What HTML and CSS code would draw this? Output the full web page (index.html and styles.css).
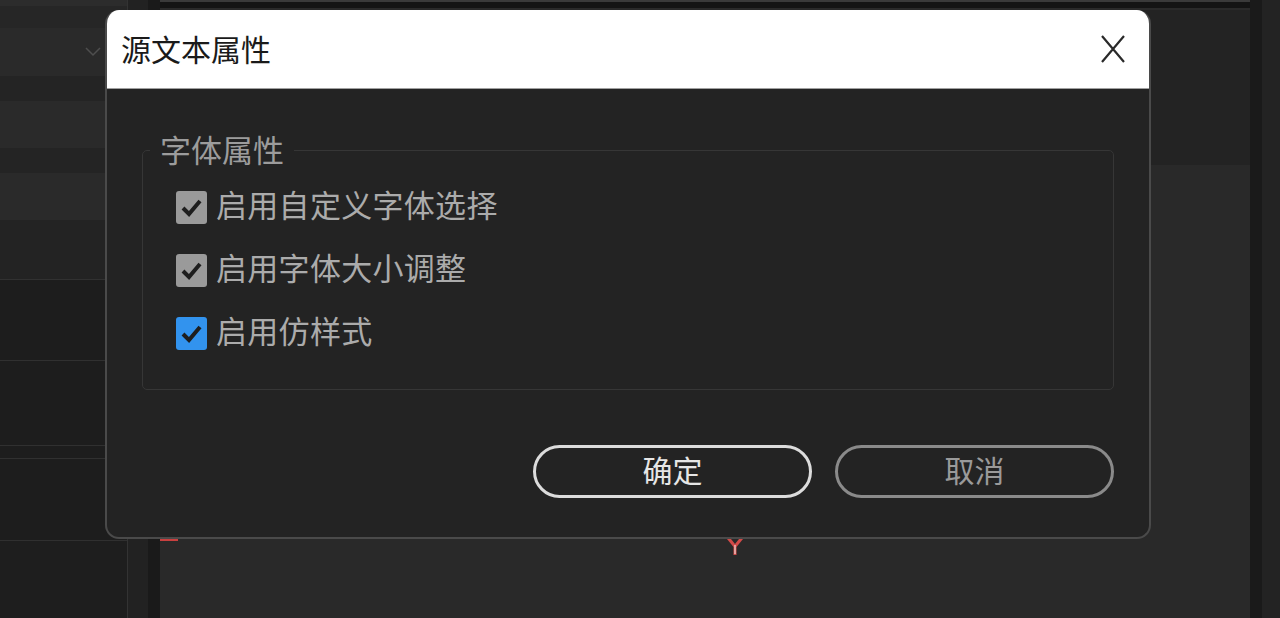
FILE: index.html
```html
<!DOCTYPE html>
<html lang="zh-CN">
<head>
<meta charset="utf-8">
<title>源文本属性</title>
<link rel="stylesheet" href="styles.css">
</head>
<body>
<div class="app">
  <aside class="left-panel">
    <div class="lp-top"></div>
    <div class="lp-row lp-light lp-select">
      <svg class="chev" width="16" height="10" viewBox="0 0 16 10"><path d="M1 1 L8 8 L15 1" fill="none" stroke="#4e4e4e" stroke-width="1.5"/></svg>
    </div>
    <div class="lp-row lp-gap"></div>
    <div class="lp-row lp-light"></div>
    <div class="lp-row lp-gap"></div>
    <div class="lp-row lp-light"></div>
    <div class="lp-row lp-plain"></div>
    <div class="lp-row lp-dark h81"></div>
    <div class="lp-row lp-dark h85"></div>
    <div class="lp-row lp-dark h13"></div>
    <div class="lp-row lp-dark h82"></div>
    <div class="lp-row lp-bottom"></div>
  </aside>
  <div class="col-narrow"></div>
  <div class="strip"></div>
  <main class="main">
    <div class="main-top"></div>
    <div class="main-upper"></div>
    <div class="main-lower"></div>
  </main>
  <div class="strip"></div>
  <div class="right-edge"></div>
</div>

<svg class="marker-red" width="18" height="4" viewBox="0 0 18 4"><rect width="18" height="4" fill="#c8403f"/></svg>
<svg class="playhead" width="18" height="18" viewBox="0 0 18 18"><path d="M1 1 L5 1 L9 6 L13 1 L17 1 L10.5 9 L10.5 17 L7.5 17 L7.5 9 Z" fill="#d24a48"/><rect x="8.3" y="7" width="1.4" height="9" fill="#f0c6c4"/></svg>

<div class="dialog" role="dialog" aria-labelledby="dlg-title">
  <header class="dialog-header">
    <h1 id="dlg-title" class="dialog-title">源文本属性</h1>
    <button class="close-btn" aria-label="关闭">
      <svg width="26" height="30" viewBox="0 0 26 30"><path d="M2 2 L24 28 M24 2 L2 28" stroke="#2a2a2a" stroke-width="2.2" fill="none"/></svg>
    </button>
  </header>
  <div class="dialog-body">
    <fieldset class="group">
      <legend class="group-legend">字体属性</legend>
      <label class="check-row">
        <span class="check check-grey"><svg width="31" height="33" viewBox="0 0 31 33"><path d="M7 17 L13 23 L24 10" fill="none" stroke="#1e1e1e" stroke-width="4"/></svg></span>
        <span class="check-label">启用自定义字体选择</span>
      </label>
      <label class="check-row">
        <span class="check check-grey"><svg width="31" height="33" viewBox="0 0 31 33"><path d="M7 17 L13 23 L24 10" fill="none" stroke="#1e1e1e" stroke-width="4"/></svg></span>
        <span class="check-label">启用字体大小调整</span>
      </label>
      <label class="check-row">
        <span class="check check-blue"><svg width="31" height="33" viewBox="0 0 31 33"><path d="M7 17 L13 23 L24 10" fill="none" stroke="#1e1e1e" stroke-width="4"/></svg></span>
        <span class="check-label">启用仿样式</span>
      </label>
    </fieldset>
    <div class="actions">
      <button class="btn btn-primary">确定</button>
      <button class="btn btn-secondary">取消</button>
    </div>
  </div>
</div>
</body>
</html>
```

FILE: styles.css
```css
* { box-sizing: border-box; }
html, body { margin: 0; padding: 0; }
body {
  width: 1280px;
  height: 618px;
  overflow: hidden;
  background: #232323;
  font-family: "Noto Sans CJK SC", "Noto Sans", sans-serif;
  position: relative;
}

.app {
  display: flex;
  width: 1280px;
  height: 618px;
}

/* left panel */
.left-panel {
  width: 127px;
  display: flex;
  flex-direction: column;
  background: #1e1e1e;
}
.lp-top {
  height: 28px;
  background: #262626;
  border-top: 6px solid #2c2c2c;
}
.lp-row { flex: none; }
.lp-light { height: 47px; background: #2a2a2a; }
.lp-select {
  height: 48px;
  display: flex;
  align-items: center;
  justify-content: flex-end;
  padding-right: 26px;
}
.lp-gap { height: 25px; background: #242424; }
.lp-plain { height: 60px; background: #232323; border-bottom: 1px solid #313131; }
.lp-dark { background: #1d1d1d; border-bottom: 1px solid #303030; }
.h81 { height: 81px; }
.h85 { height: 85px; }
.h13 { height: 13px; }
.h82 { height: 82px; }
.lp-bottom { flex: 1; background: #1e1e1e; }

.col-narrow {
  width: 21px;
  background: #222222;
  border-left: 1px solid #333333;
}
.strip {
  width: 12px;
  background: #1a1a1a;
}
.main {
  flex: 1;
  display: flex;
  flex-direction: column;
}
.main-top {
  height: 10px;
  background: #141414;
  border-top: 2px solid #3a3a3a;
  border-bottom: 2px solid #2a2a2a;
}
.main-upper {
  height: 155px;
  background: #232323;
}
.main-lower {
  flex: 1;
  background: #292929;
}
.right-edge {
  width: 18px;
  background: #232323;
}

/* overlay markers */
.marker-red {
  position: absolute;
  left: 160px;
  top: 537px;
}
.playhead {
  position: absolute;
  left: 726px;
  top: 538px;
}

/* dialog */
.dialog {
  position: absolute;
  left: 105px;
  top: 10px;
  width: 1046px;
  height: 529px;
  border-radius: 14px;
  background: #232323;
  border: 2px solid #4a4a4a;
  border-top: none;
  display: flex;
  flex-direction: column;
  overflow: hidden;
}
.dialog-header {
  height: 79px;
  flex: none;
  background: #ffffff;
  border-bottom: 1px solid #a0a0a0;
  display: flex;
  align-items: center;
  justify-content: space-between;
  padding: 0 25px 0 16px;
  margin: 0 -2px;
}
.dialog-title {
  margin: 0 0 3px 0;
  font-size: 30px;
  font-weight: 400;
  color: #1a1a1a;
  line-height: 40px;
}
.close-btn {
  border: none;
  background: transparent;
  padding: 0;
  width: 26px;
  height: 30px;
  display: flex;
}

.dialog-body {
  flex: 1;
  padding: 41px 35px 0 35px;
  display: flex;
  flex-direction: column;
}

.group {
  margin: 0;
  border: 1px solid #363636;
  border-radius: 5px;
  padding: 6px 20px 24px 33px;
  display: flex;
  flex-direction: column;
}
.group-legend {
  font-size: 31px;
  line-height: 40px;
  color: #9c9c9c;
  padding: 0 10px;
  margin-left: -26px;
  position: relative;
  top: -1px;
}
.check-row {
  height: 63px;
  display: flex;
  align-items: center;
  gap: 9px;
}
.check {
  width: 31px;
  height: 33px;
  border-radius: 3px;
  display: flex;
  flex: none;
}
.check-grey { background: #9a9a9a; }
.check-blue { background: #3293ee; }
.check-label {
  font-size: 31px;
  color: #ababab;
  line-height: 40px;
  letter-spacing: 0.3px;
  padding-bottom: 8px;
}

.actions {
  margin-top: 55px;
  display: flex;
  justify-content: flex-end;
  gap: 23px;
}
.btn {
  width: 279px;
  height: 53px;
  border-radius: 27px;
  background: transparent;
  font-family: "Noto Sans CJK SC", "Noto Sans", sans-serif;
  font-size: 30px;
  padding: 0 0 5px 0;
  line-height: 1;
}
.btn-primary {
  border: 3px solid #dcdcdc;
  color: #e6e6e6;
}
.btn-secondary {
  border: 3px solid #8a8a8a;
  color: #9a9a9a;
}
```
